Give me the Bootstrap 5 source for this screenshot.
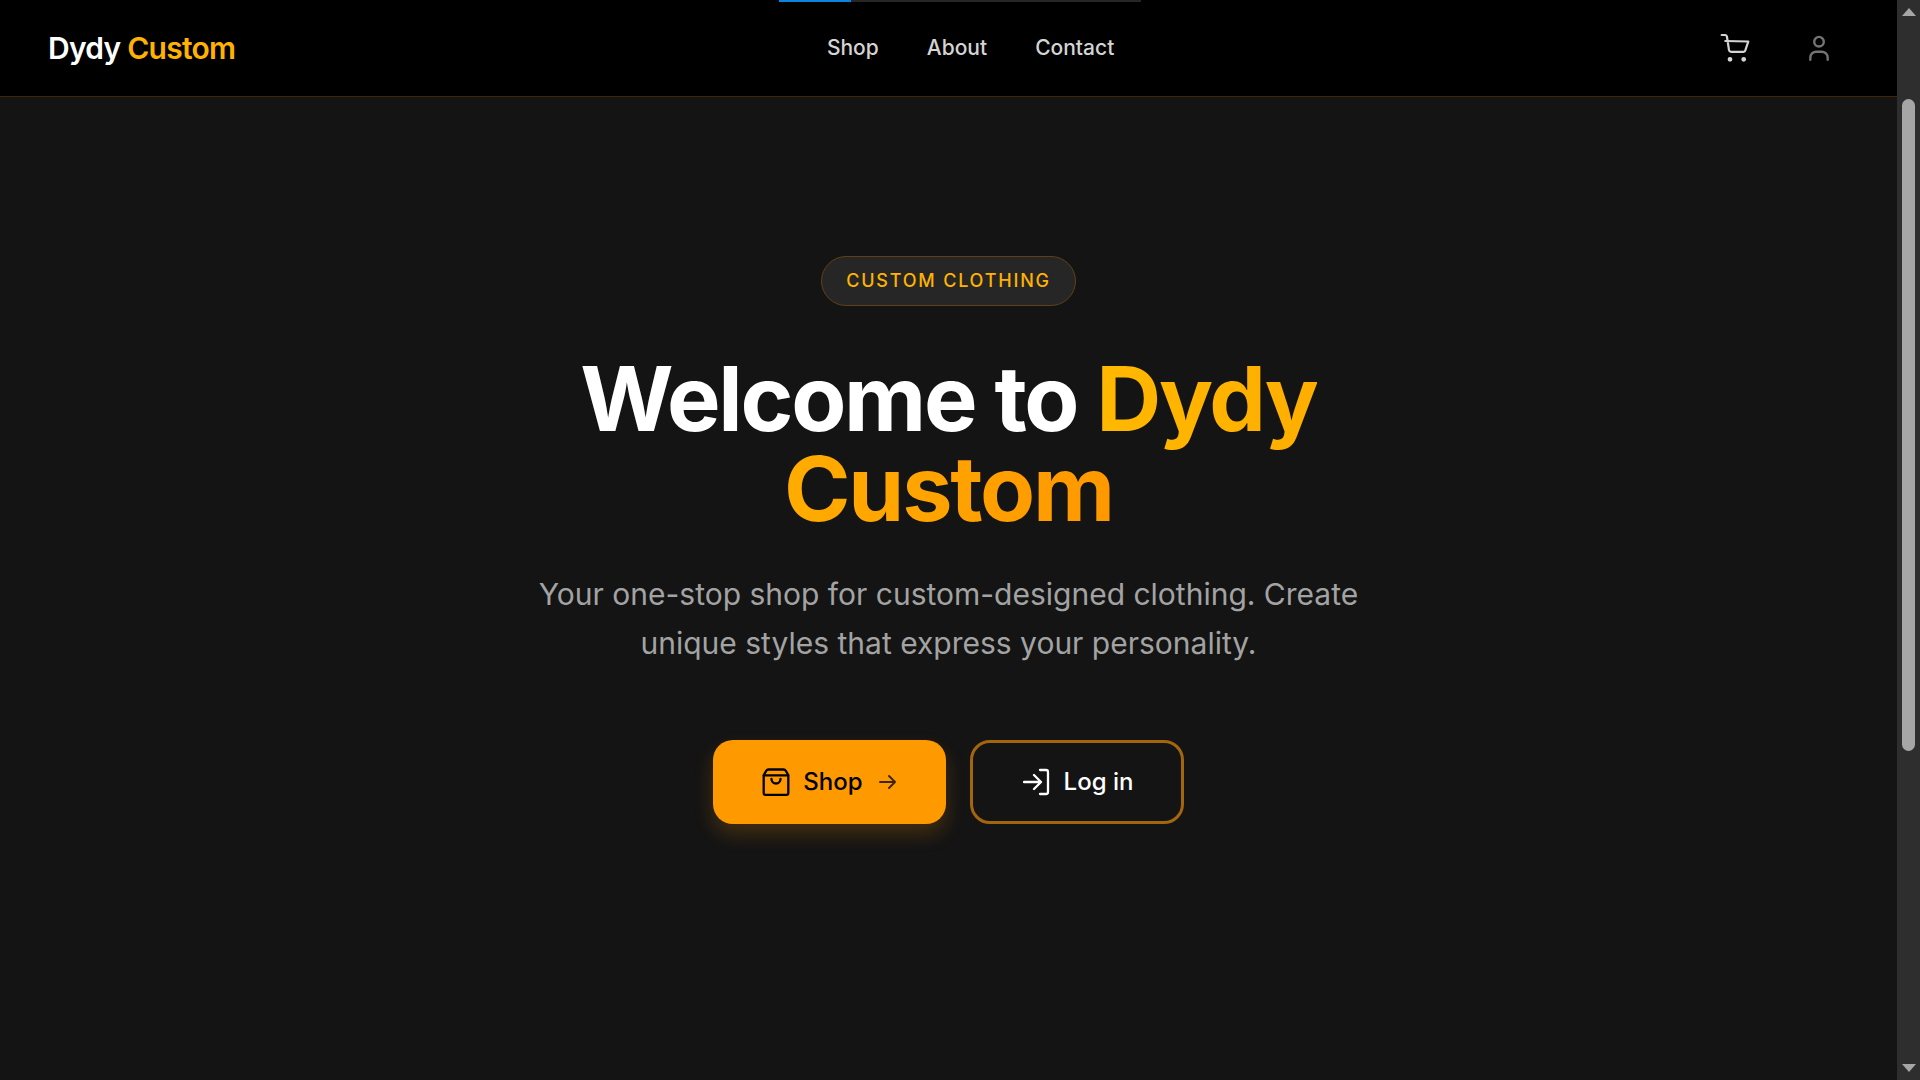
<!DOCTYPE html>
<html lang="en">
<head>
<meta charset="utf-8">
<title>Dydy Custom</title>
<link href="https://cdn.jsdelivr.net/npm/bootstrap@5.3.0/dist/css/bootstrap.min.css" rel="stylesheet">
<style>
html,body{height:100%;overflow:hidden;}
body{background:#141414;font-family:Inter,"Liberation Sans",sans-serif;color:#fff;}
.shell{height:100vh;}
.page{min-width:0;position:relative;}
.topbar{height:97px;background:#000;border-bottom:1px solid #3d2705;padding:0 49px 0 48px;}
.brand{font-size:30px;font-weight:600;letter-spacing:-.025em;color:#fff;text-decoration:none;line-height:1;}
.brand span{color:#ffb300;}
.menu{gap:48px;}
.menu a{font-size:21px;font-weight:500;color:#d4d4d4;text-decoration:none;line-height:28px;}
.icon-set{gap:26px;}
.icon-btn{width:58px;height:48px;background:none;border:0;padding:0;}
.loader{position:absolute;top:0;left:779px;width:362px;height:2px;background:#262626;}
.loader div{width:72px;height:2px;background:#0a84e0;}
.hero{padding-top:159px;}
.pill{height:50px;padding:0 24px 1px;border:1px solid #614015;border-radius:25px;background:#262626;color:#ffb300;font-size:18px;font-weight:500;letter-spacing:.1em;}
.hero-title{font-size:90px;line-height:90px;font-weight:700;letter-spacing:-.025em;margin:48px 0 0;max-width:900px;}
.grad-a,.grad-b{-webkit-background-clip:text;background-clip:text;color:transparent;}
.grad-a{background-image:linear-gradient(90deg,#ffb800,#ffae00);}
.grad-b{background-image:linear-gradient(90deg,#ffac00,#ff9800);}
.hero-sub{font-size:30px;line-height:49px;color:#a3a3a3;margin:36px 0 0;max-width:896px;}
.cta-row{gap:24px;margin-top:72px;}
.cta{height:84px;border-radius:20px;font-size:24px;font-weight:500;line-height:32px;padding:0;display:inline-flex;align-items:center;justify-content:center;}
.cta-main{width:233px;background:#ff9900;color:#000;border:0;box-shadow:0 10px 20px rgba(255,153,0,.2);gap:13px;}
.cta-main:hover{background:#ff9900;color:#000;}
.cta-alt{width:214px;background:transparent;color:#fff;border:3px solid #a3660c;gap:14px;padding-left:2px;}
.cta-alt:hover{background:transparent;color:#fff;border-color:#a3660c;}
.cta-arrow{margin-left:3px;}
.rail{width:23px;flex:none;background:#2e2e2e;}
.rail-up,.rail-down{width:0;height:0;border-left:7.500px solid transparent;border-right:7.500px solid transparent;}
.rail-up{border-bottom:8px solid #a6a6a6;margin-top:8px;}
.rail-down{border-top:8px solid #a6a6a6;margin-bottom:8px;}
.rail-thumb{width:13px;height:652px;margin-top:83px;background:#a6a6a6;border-radius:7px;}
</style>
</head>
<body>
<div class="shell d-flex">
  <div class="page flex-grow-1 d-flex flex-column">
    <div class="loader"><div></div></div>
    <nav class="topbar d-flex align-items-center justify-content-between">
      <a class="brand" href="#">Dydy <span>Custom</span></a>
      <div class="menu d-flex">
        <a href="#">Shop</a><a href="#">About</a><a href="#">Contact</a>
      </div>
      <div class="icon-set d-flex align-items-center">
        <button class="icon-btn d-flex align-items-center justify-content-center" aria-label="Cart">
          <svg width="32" height="32" viewBox="0 0 32 32" fill="none" stroke="#d4d4d4" stroke-width="2.2" stroke-linecap="round" stroke-linejoin="round"><path d="M2.700 3h3.300c1 0 1.700.7 1.900 1.500L10 18c.2 1 1 1.800 2 1.800h12.500c1 0 1.700-.7 1.900-1.600L29.300 9.500 6.300 9"/><circle cx="11" cy="27.300" r="1.300" fill="#d4d4d4"/><circle cx="24.700" cy="27.300" r="1.300" fill="#d4d4d4"/></svg>
        </button>
        <button class="icon-btn d-flex align-items-center justify-content-center" aria-label="Account">
          <svg width="24" height="28" viewBox="0 0 24 28" fill="none" stroke="#737373" stroke-width="2.400" stroke-linecap="round"><circle cx="12" cy="7.700" r="4.800"/><path d="M3.300 25.700v-2a6 6 0 0 1 6-6h5.400a6 6 0 0 1 6 6v2"/></svg>
        </button>
      </div>
    </nav>
    <main class="hero flex-grow-1 d-flex flex-column align-items-center text-center">
      <div class="pill d-inline-flex align-items-center">CUSTOM CLOTHING</div>
      <h1 class="hero-title">Welcome to <span class="grad-a">Dydy</span> <span class="grad-b">Custom</span></h1>
      <p class="hero-sub">Your one-stop shop for custom-designed clothing. Create unique styles that express your personality.</p>
      <div class="cta-row d-flex">
        <a class="btn cta cta-main" href="#">
          <svg width="28" height="28" viewBox="0 0 28 28" fill="none" stroke="#000" stroke-width="2.300" stroke-linecap="round" stroke-linejoin="round"><path d="M6.500 1.500h15c1 0 1.800.5 2.300 1.300l2 3.500c.3.5.5 1 .5 1.700v17c0 1-.8 1.800-1.800 1.800h-21c-1 0-1.800-.8-1.800-1.800V8c0-.7.2-1.200.5-1.700l2-3.500c.5-.8 1.300-1.300 2.300-1.300z"/><path d="M1.700 7.300h24.600"/><path d="M9.500 11a4.500 4.500 0 0 0 9 0"/></svg>
          <span>Shop</span>
          <svg class="cta-arrow" width="18" height="16" viewBox="0 0 18 16" fill="none" stroke="#000" stroke-opacity=".75" stroke-width="2" stroke-linecap="round" stroke-linejoin="round"><path d="M1 8h15M10 2l6 6-6 6"/></svg>
        </a>
        <a class="btn cta cta-alt" href="#">
          <svg width="27" height="28" viewBox="0 0 27 28" fill="none" stroke="#fff" stroke-width="2.300" stroke-linecap="round" stroke-linejoin="round"><path d="M17 2h6a2 2 0 0 1 2 2v20a2 2 0 0 1-2 2h-6"/><path d="M1 14h16M11 7l7 7-7 7"/></svg>
          <span>Log in</span>
        </a>
      </div>
    </main>
  </div>
  <div class="rail d-flex flex-column align-items-center">
    <div class="rail-up"></div>
    <div class="rail-thumb"></div>
    <div class="rail-down mt-auto"></div>
  </div>
</div>
</body>
</html>
